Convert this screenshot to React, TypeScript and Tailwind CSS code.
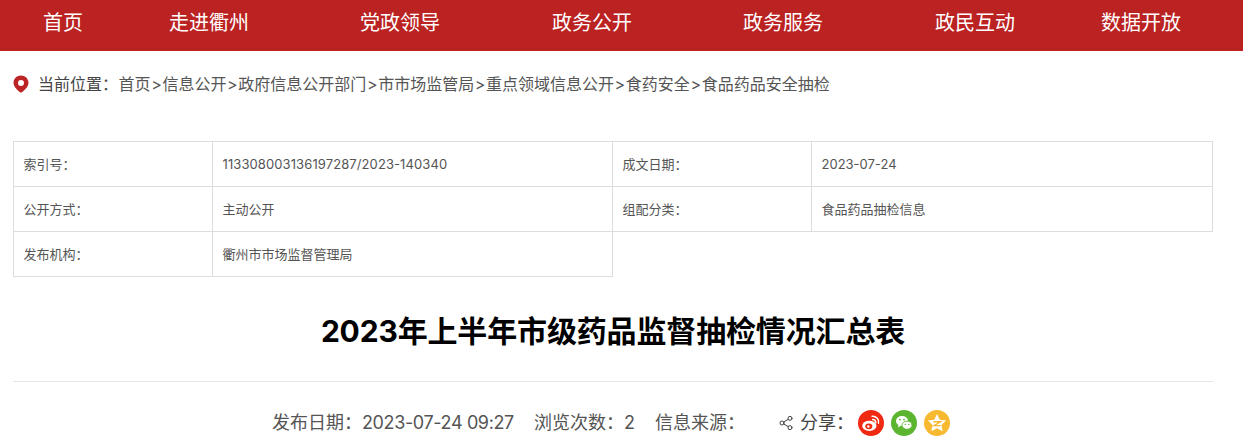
import React from "react";
import { Share2 } from "lucide-react";

const FONT = "font-['Inter','Noto_Sans_CJK_SC',sans-serif]";

const navItems = [
  { label: "首页", cls: "ml-[43px]" },
  { label: "走进衢州", cls: "ml-[86px]" },
  { label: "党政领导", cls: "ml-[111px]" },
  { label: "政务公开", cls: "ml-[112px]" },
  { label: "政务服务", cls: "ml-[111px]" },
  { label: "政民互动", cls: "ml-[112px]" },
  { label: "数据开放", cls: "ml-[86px]" },
];

const crumbs = ["首页", "信息公开", "政府信息公开部门", "市市场监管局", "重点领域信息公开", "食药安全", "食品药品安全抽检"];

const Cell = ({ children, w }: { children: React.ReactNode; w: string }) => (
  <td className={`${w} h-[45px] border border-[#dddddd] pl-[9.5px] pt-[1px] text-[13px] text-[#555555]`}>{children}</td>
);

export default function App() {
  return (
    <div className={`${FONT} w-[1243px] h-[447px] overflow-hidden bg-white`}>
      {/* 导航 */}
      <nav className="flex items-center h-[51px] bg-[#bb2222] text-white text-xl leading-[46px] pb-[5px]">
        {navItems.map((n) => (
          <a key={n.label} className={`${n.cls} font-normal whitespace-nowrap`}>
            {n.label}
          </a>
        ))}
      </nav>

      {/* 当前位置 */}
      <div className="flex items-center h-[20px] mt-[23px] ml-[13px] text-base text-[#555555]">
        <svg viewBox="0 0 16 18" className="w-4 h-[18px] mb-[1px]">
          <path
            fillRule="evenodd"
            fill="#bb2525"
            d="M8 0.5C3.8 0.5 0.5 3.7 0.5 7.8C0.5 12 4.8 15.9 8 17.8C11.2 15.9 15.5 12 15.5 7.8C15.5 3.7 12.2 0.5 8 0.5ZM8 5A3 3 0 1 1 8 11A3 3 0 1 1 8 5Z"
          />
        </svg>
        <span className="ml-[9px] text-[#444444]">当前位置：</span>
        <span className="ml-[0.6px] flex items-center whitespace-nowrap">
          {crumbs.map((c, i) => (
            <React.Fragment key={c}>
              {i > 0 && <span className="w-[11.83px] text-center">&gt;</span>}
              <span>{c}</span>
            </React.Fragment>
          ))}
        </span>
      </div>

      {/* 信息表 */}
      <table className="mt-[47px] ml-[13px] w-[1200px] table-fixed border-collapse">
        <tbody>
          <tr>
            <Cell w="w-[199px]">索引号：</Cell>
            <Cell w="w-[400px]"><span className="tracking-[0.1px]">113308003136197287/2023-140340</span></Cell>
            <Cell w="w-[199px]">成文日期：</Cell>
            <Cell w="w-[401px]">2023-07-24</Cell>
          </tr>
          <tr>
            <Cell w="w-[199px]">公开方式：</Cell>
            <Cell w="w-[400px]">主动公开</Cell>
            <Cell w="w-[199px]">组配分类：</Cell>
            <Cell w="w-[401px]">食品药品抽检信息</Cell>
          </tr>
          <tr>
            <Cell w="w-[199px]">发布机构：</Cell>
            <Cell w="w-[400px]">衢州市市场监督管理局</Cell>
          </tr>
        </tbody>
      </table>

      {/* 标题 */}
      <h1 className="mt-[34px] ml-[13px] w-[1200px] text-center text-[30px] leading-[40px] font-bold tracking-[-0.15px] text-black">
        2023年上半年市级药品监督抽检情况汇总表
      </h1>
      <div className="mt-[30px] ml-[13px] w-[1200px] border-t border-[#e5e5e5]" />

      {/* 元信息 */}
      <div className="flex items-center mt-[27px] ml-[272px] h-[28px] text-lg text-[#555555] whitespace-nowrap">
        <span>发布日期：<span className="tracking-[-0.37px]">2023-07-24 09:27</span></span>
        <span className="ml-[20px]">浏览次数：2</span>
        <span className="ml-[20px]">信息来源：</span>
        <Share2 className="ml-[33px] w-[16px] h-[16px] text-[#444444]" strokeWidth={1.5} />
        <span className="ml-[6px] text-[#444444]">分享：</span>
        <span className="ml-[4px] flex gap-[7px]">
          <span className="flex items-center justify-center w-[26px] h-[26px] rounded-full bg-[#f02a12]">
            <svg viewBox="0 0 20 20" className="w-[22px] h-[22px]">
              <ellipse cx="8.5" cy="12.6" rx="6.5" ry="4.6" fill="#fff" />
              <ellipse cx="8" cy="13" rx="3.2" ry="2.6" fill="#f02a12" />
              <circle cx="7.6" cy="13.2" r="1.1" fill="#fff" />
              <path d="M11 3.8a5.4 5.4 0 0 1 5.8 6.4M11.5 6.8a2.6 2.6 0 0 1 2.8 3" stroke="#fff" strokeWidth="1.4" fill="none" strokeLinecap="round" />
            </svg>
          </span>
          <span className="flex items-center justify-center w-[26px] h-[26px] rounded-full bg-[#5cb531]">
            <svg viewBox="0 0 20 20" className="w-[20px] h-[20px]">
              <ellipse cx="8" cy="8" rx="6" ry="5" fill="#fff" />
              <path d="M4.5 11.5L4 14.5L7 12.5Z" fill="#fff" />
              <ellipse cx="13" cy="12.2" rx="5" ry="4.1" fill="#fff" stroke="#5cb531" strokeWidth="0.9" />
              <circle cx="6" cy="6.6" r="0.9" fill="#5cb531" />
              <circle cx="10" cy="6.6" r="0.9" fill="#5cb531" />
              <circle cx="11.3" cy="11.4" r="0.7" fill="#5cb531" />
              <circle cx="14.7" cy="11.4" r="0.7" fill="#5cb531" />
            </svg>
          </span>
          <span className="flex items-center justify-center w-[26px] h-[26px] rounded-full bg-[#f6b92f]">
            <svg viewBox="0 0 20 20" className="w-[24px] h-[24px]">
              <path
                d="M10 2.5L12.3 7.3L17.6 8L13.7 11.6L14.7 16.8L10 14.3L5.3 16.8L6.3 11.6L2.4 8L7.7 7.3Z"
                fill="#fff"
              />
              <path d="M7 9H12.8L7.6 12.2H13" stroke="#f6b92f" strokeWidth="1.2" fill="none" />
            </svg>
          </span>
        </span>
      </div>
    </div>
  );
}
